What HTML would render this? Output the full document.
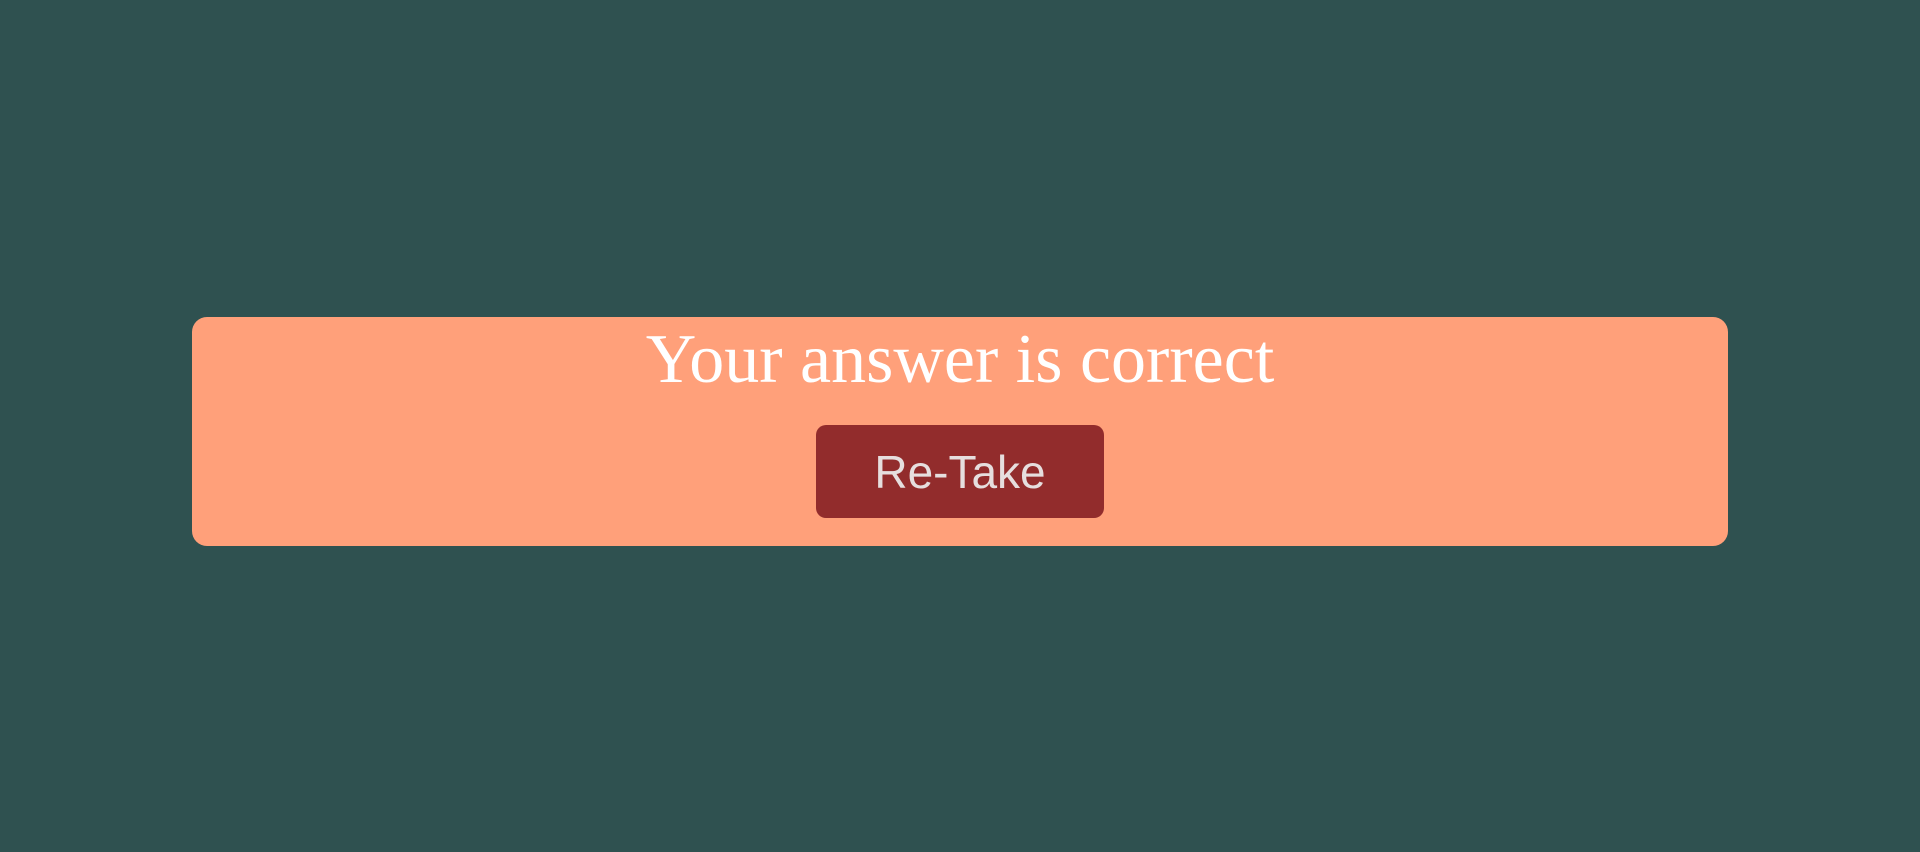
<!DOCTYPE html>
<html><head><meta charset="utf-8"><style>
html,body{margin:0;padding:0;width:1920px;height:852px;background:#2f5150;overflow:hidden}
.card{position:absolute;left:192px;top:317px;width:1536px;height:229px;background:#ffa07a;border-radius:15px}
.title{position:absolute;left:0;width:1920px;top:325px;line-height:70px;font-family:"Liberation Serif",serif;font-size:70px;color:#fff;text-align:center}
.btn{position:absolute;left:816px;top:425px;width:288px;height:93px;background:#922c2c;border-radius:10px;color:#e6dede;font-family:"Liberation Sans",sans-serif;font-size:46px;line-height:94px;text-align:center}
</style></head><body>
<div class="card"></div>
<div class="title">Your answer is correct</div>
<div class="btn">Re-Take</div>
</body></html>
